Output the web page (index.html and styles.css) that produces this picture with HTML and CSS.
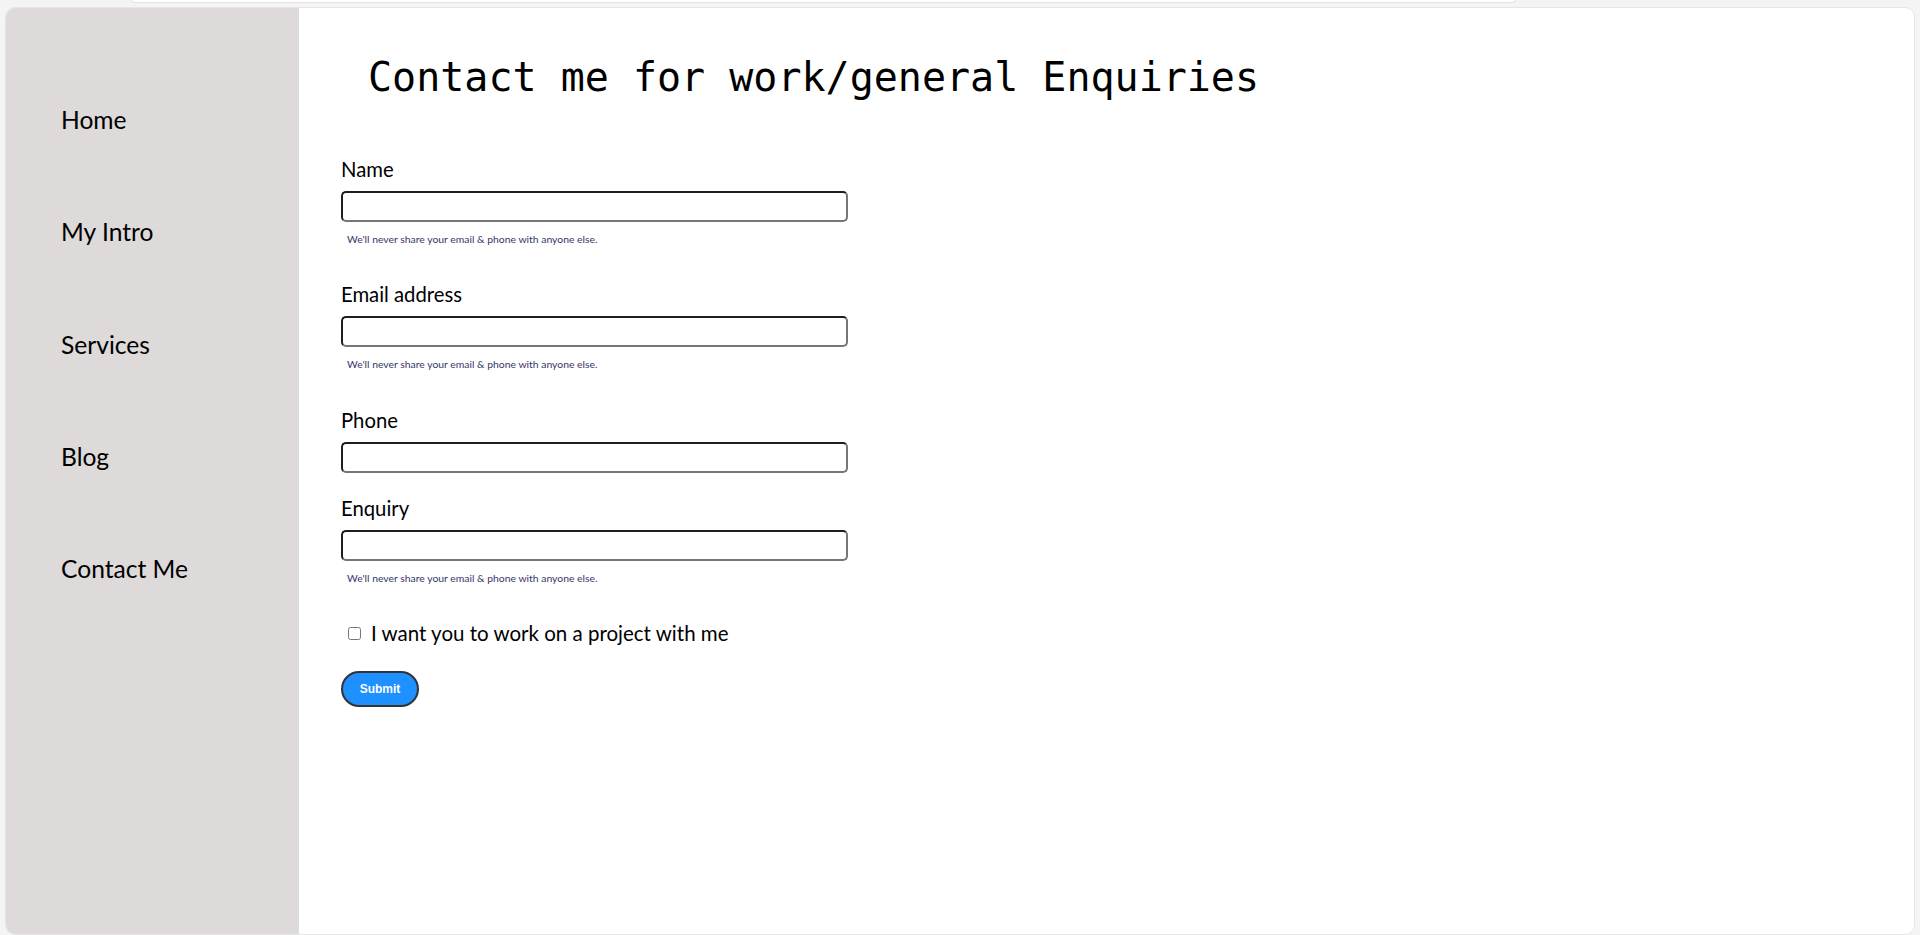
FILE: index.html
```html
<!DOCTYPE html>
<html lang="en">
<head>
<meta charset="utf-8">
<title>Contact</title>
<link rel="stylesheet" href="styles.css">
</head>
<body>
<div class="topbar"><div class="tab"></div></div>
<div class="card">
  <nav class="sidebar">
    <a class="nav-item" href="#">Home</a>
    <a class="nav-item" href="#">My Intro</a>
    <a class="nav-item" href="#">Services</a>
    <a class="nav-item" href="#">Blog</a>
    <a class="nav-item" href="#">Contact Me</a>
  </nav>
  <main class="main">
    <h1 class="title">Contact me for work/general Enquiries</h1>
    <form class="form">
      <div class="field field-name">
        <label class="label">Name</label>
        <input class="input" type="text">
        <small class="hint">We'll never share your email &amp; phone with anyone else.</small>
      </div>
      <div class="field field-email">
        <label class="label">Email address</label>
        <input class="input" type="email">
        <small class="hint">We'll never share your email &amp; phone with anyone else.</small>
      </div>
      <div class="field field-phone">
        <label class="label">Phone</label>
        <input class="input" type="tel">
      </div>
      <div class="field field-enquiry">
        <label class="label">Enquiry</label>
        <input class="input" type="text">
        <small class="hint">We'll never share your email &amp; phone with anyone else.</small>
      </div>
      <label class="check-row"><input class="check" type="checkbox"><span>I want you to work on a project with me</span></label>
      <button class="submit" type="button">Submit</button>
    </form>
  </main>
</div>
</body>
</html>
```
FILE: styles.css
```css
* { box-sizing: border-box; }
html, body { margin: 0; padding: 0; }
body {
  background: #f4f4f4;
  height: 935px;
  overflow: hidden;
  font-family: Lato, "Noto Sans", sans-serif;
  color: #000;
}
.topbar {
  height: 7px;
  padding-left: 131px;
}
.tab {
  width: 1385px;
  height: 3px;
  background: #fff;
  border: 1px solid #e2e2e2;
  border-top: 0;
  border-radius: 0 0 8px 8px;
}
.card {
  margin: 0 5px;
  height: 928px;
  display: flex;
  background: #fff;
  border: 1px solid #e6e6e6;
  border-radius: 10px;
  overflow: hidden;
}
.sidebar {
  width: 293px;
  flex: none;
  background: #dddad9;
  display: flex;
  flex-direction: column;
  gap: 82.3px;
  padding: 97px 0 0 55px;
}
.nav-item {
  font-size: 24.6px;
  line-height: 30px;
  color: #000;
  text-decoration: none;
}
.main {
  flex: 1;
  padding: 0 0 0 42px;
}
.title {
  margin: 45px 0 0 0;
  padding-left: 27px;
  font-family: "DejaVu Sans Mono", monospace;
  font-weight: normal;
  font-size: 40px;
  line-height: 48px;
}
.form {
  width: 507px;
  margin-top: 56px;
}
.field { display: block; }
.label {
  display: block;
  font-size: 20.3px;
  line-height: 24px;
  margin-bottom: 10px;
}
.input {
  display: block;
  width: 100%;
  height: 31px;
  border: 2px solid;
  border-color: #1e1e1e #767676 #767676 #1e1e1e;
  border-radius: 5px;
  background: #fff;
  padding: 0 6px;
  font-size: 16px;
}
.hint {
  display: block;
  margin-top: 11px;
  padding-left: 6px;
  font-size: 10.4px;
  line-height: 12px;
  color: #35356b;
}
.field-name { margin-bottom: 37px; }
.field-email { margin-bottom: 38px; }
.field-phone { margin-bottom: 23px; }
.field-enquiry { margin-bottom: 37px; }
.check-row {
  display: flex;
  align-items: center;
  font-size: 20.5px;
  line-height: 24px;
}
.check {
  width: 13px;
  height: 13px;
  margin: 0 10px 0 7px;
}
.submit {
  display: block;
  margin-top: 26px;
  width: 78px;
  height: 36px;
  background: #1e90ff;
  color: #fff;
  border: 2px solid #333;
  border-radius: 18px;
  font-family: "Liberation Sans", Arial, sans-serif;
  font-weight: bold;
  font-size: 12px;
  padding: 0;
}
```
